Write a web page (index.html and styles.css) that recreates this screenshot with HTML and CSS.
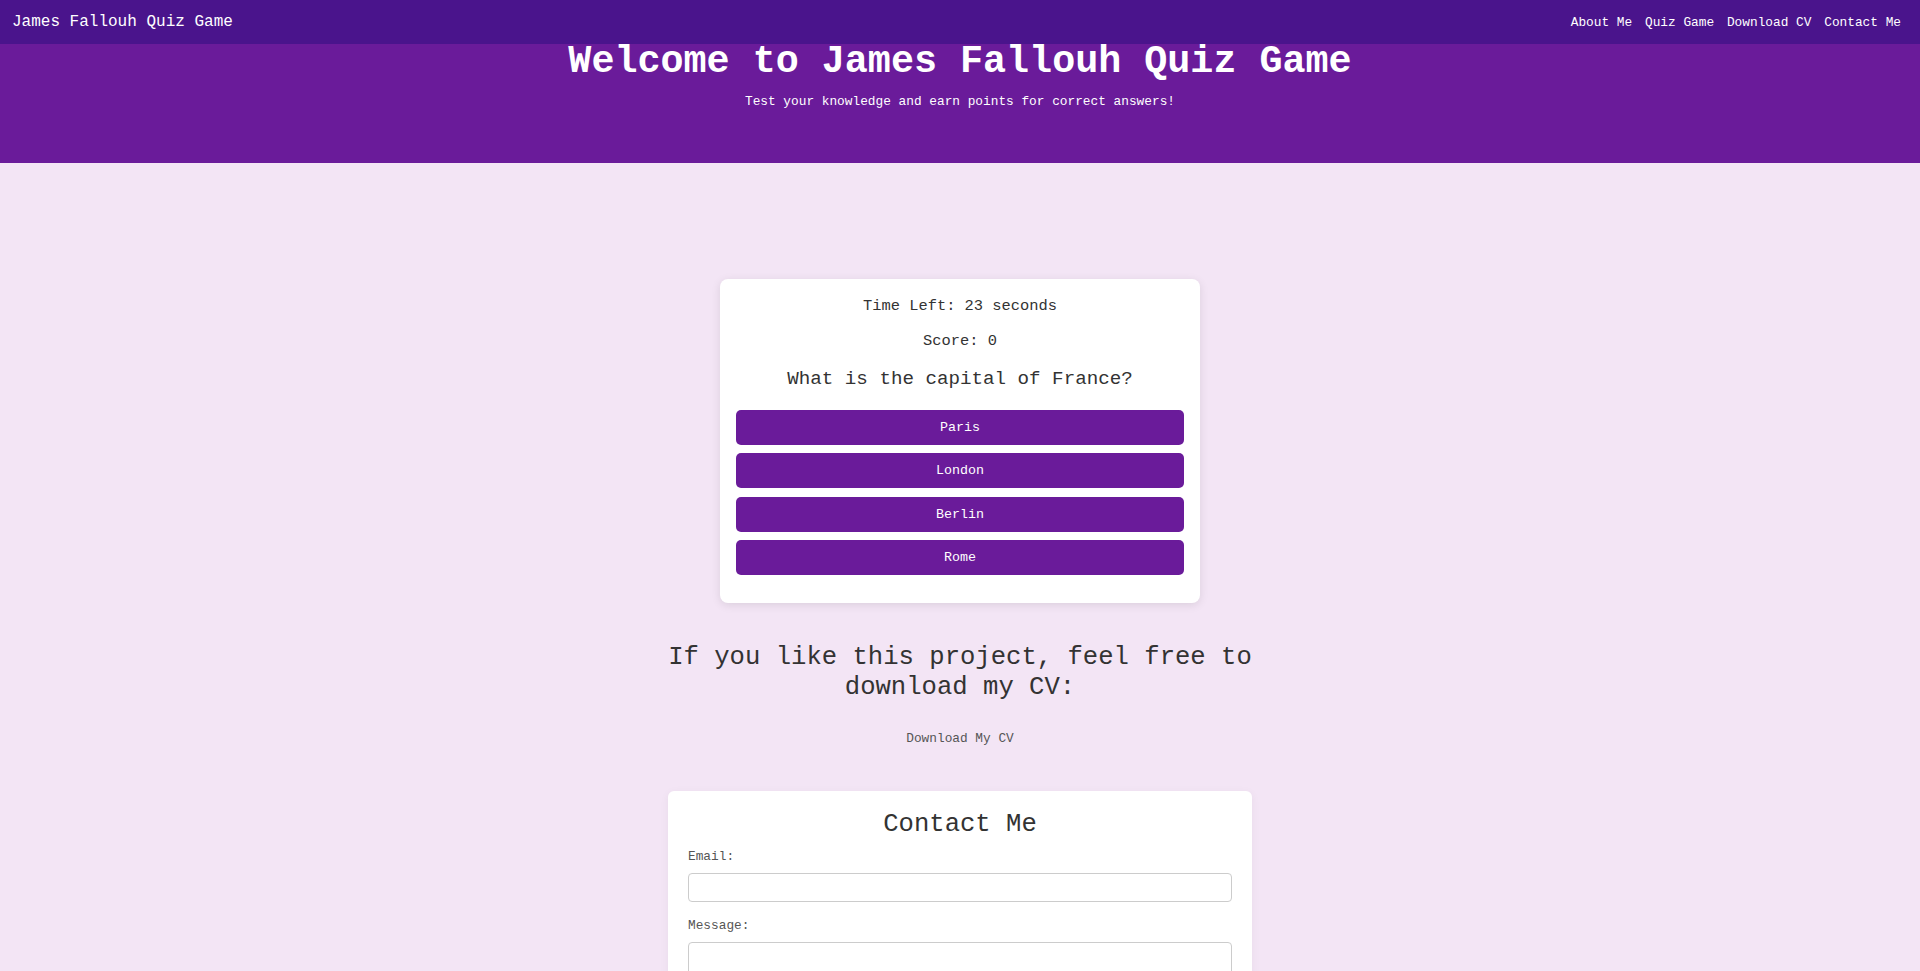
FILE: index.html
```html
<!DOCTYPE html>
<html lang="en">
<head>
<meta charset="utf-8">
<title>James Fallouh Quiz Game</title>
<link rel="stylesheet" href="styles.css">
</head>
<body>
<nav class="navbar">
  <a class="brand" href="#">James Fallouh Quiz Game</a>
  <div class="nav-links">
    <a href="#">About Me</a>
    <a href="#">Quiz Game</a>
    <a href="#">Download CV</a>
    <a href="#">Contact Me</a>
  </div>
</nav>
<header class="hero">
  <h1 class="hero-title">Welcome to James Fallouh Quiz Game</h1>
  <p class="hero-sub">Test your knowledge and earn points for correct answers!</p>
</header>
<main class="main">
  <section class="quiz-card">
    <p class="timer">Time Left: 23 seconds</p>
    <p class="score">Score: 0</p>
    <h2 class="question">What is the capital of France?</h2>
    <div class="answers">
      <button class="answer">Paris</button>
      <button class="answer">London</button>
      <button class="answer">Berlin</button>
      <button class="answer">Rome</button>
    </div>
  </section>
  <section class="cv">
    <h2 class="cv-title">If you like this project, feel free to download my CV:</h2>
    <a class="cv-link" href="#">Download My CV</a>
  </section>
  <section class="contact-card">
    <h2 class="contact-title">Contact Me</h2>
    <form class="contact-form">
      <label class="label" for="email">Email:</label>
      <input class="field" id="email" type="email">
      <label class="label label-msg" for="msg">Message:</label>
      <textarea class="field area" id="msg"></textarea>
    </form>
  </section>
</main>
</body>
</html>
```
FILE: styles.css
```css
html { scrollbar-width: none; }
html::-webkit-scrollbar { display: none; }
* { box-sizing: border-box; }
body {
  margin: 0;
  background: #f3e5f5;
  font-family: "Liberation Mono", "Courier New", monospace;
  color: #333;
}
.navbar {
  position: fixed;
  top: 0; left: 0; right: 0;
  height: 44px;
  background: #4a148c;
  display: flex;
  align-items: center;
  justify-content: space-between;
  padding: 0 19px 0 12px;
  z-index: 10;
}
.brand {
  color: #fff;
  text-decoration: none;
  font-size: 16px;
}
.nav-links {
  display: flex;
  gap: 12.8px;
}
.nav-links a {
  color: #fff;
  text-decoration: none;
  font-size: 12.8px;
}
.hero {
  background: #6a1b9a;
  height: 163px;
  padding-top: 40px;
  text-align: center;
  color: #fff;
}
.hero-title {
  margin: 0;
  font-size: 38.4px;
  font-weight: bold;
  line-height: normal;
}
.hero-sub {
  margin: 9.5px 0 0;
  font-size: 12.8px;
  line-height: normal;
}
.main {
  padding-top: 116px;
  display: flex;
  flex-direction: column;
  align-items: center;
}
.quiz-card {
  width: 480px;
  background: #fff;
  border-radius: 8px;
  box-shadow: 0 2px 10px rgba(0,0,0,0.1);
  padding: 16.5px 16px 28px;
  text-align: center;
}
.timer, .score {
  margin: 0;
  font-size: 15.4px;
  line-height: 20px;
}
.score { margin-top: 15.5px; }
.question {
  margin: 17px 0 19px;
  font-size: 19.2px;
  font-weight: normal;
  line-height: 23px;
}
.answers {
  display: flex;
  flex-direction: column;
  gap: 8.4px;
}
.answer {
  display: block;
  width: 100%;
  height: 35px;
  border: none;
  border-radius: 5px;
  background: #6a1b9a;
  color: #fff;
  font-family: "Liberation Mono", "Courier New", monospace;
  font-size: 13.33px;
  line-height: 15px;
  padding: 0;
}
.cv {
  width: 602px;
  margin-top: 40px;
  text-align: center;
  display: flex;
  flex-direction: column;
  align-items: center;
}
.cv-title {
  margin: 0;
  font-size: 25.6px;
  font-weight: normal;
  line-height: 30px;
}
.cv-link {
  margin-top: 28px;
  font-size: 12.8px;
  line-height: 15px;
  color: #555;
  text-decoration: none;
}
.contact-card {
  width: 584px;
  margin-top: 45px;
  background: #fff;
  border-radius: 6px;
  padding: 19px 20px 20px;
  box-shadow: 0 2px 10px rgba(0,0,0,0.05);
}
.contact-title {
  margin: 0;
  text-align: center;
  font-size: 25.6px;
  font-weight: normal;
  line-height: 30px;
}
.contact-form {
  display: flex;
  flex-direction: column;
  margin-top: 9px;
}
.label {
  font-size: 12.8px;
  line-height: 15px;
  color: #555;
  margin-bottom: 9px;
}
.label-msg { margin-top: 16px; }
.field {
  width: 100%;
  height: 29px;
  border: 1px solid #ccc;
  border-radius: 4px;
  background: #fff;
  font-family: inherit;
}
.area { height: 80px; resize: vertical; }
```
